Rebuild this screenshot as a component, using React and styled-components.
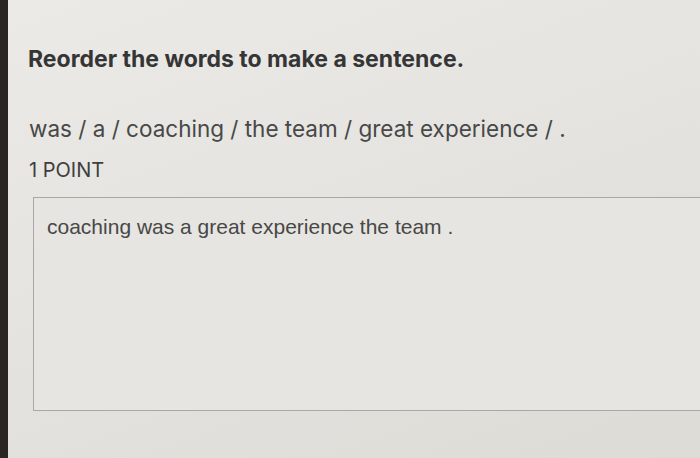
import React from "react";
import styled, { createGlobalStyle } from "styled-components";

const Global = createGlobalStyle`
  html, body { margin: 0; padding: 0; background: #e4e3df; }
  body { width: 700px; height: 458px; overflow: hidden; }
`;

const Screen = styled.div`
  display: flex;
  width: 700px;
  height: 458px;
  background: linear-gradient(160deg, #ebeae6 0%, #e4e3df 50%, #dcdbd6 100%);
  overflow: hidden;
`;

const Bezel = styled.div`
  flex: 0 0 8px;
  background: #2a2522;
`;

const Content = styled.main`
  flex: 1;
  display: flex;
  flex-direction: column;
  padding: 45px 0 0 19px;
  font-family: Inter, "Liberation Sans", sans-serif;
`;

const Heading = styled.h1`
  margin: 0 0 0 1px;
  font-size: 23px;
  line-height: 28px;
  font-weight: 700;
  color: #353535;
`;

const Prompt = styled.p`
  margin: 42px 0 0 2px;
  font-size: 22.5px;
  line-height: 28px;
  font-weight: 400;
  color: #484848;
`;

const Points = styled.div`
  margin: 15px 0 0 2px;
  font-size: 20px;
  line-height: 24px;
  color: #3e3e3e;
`;

const AnswerBox = styled.div`
  margin: 15px 0 0 6px;
  height: 214px;
  width: 700px;
  border: 1px solid #a9a8a4;
  background: #e6e5e1;
  padding: 17px 13px;
  box-sizing: border-box;
  font-family: "Liberation Sans", Arial, sans-serif;
  font-size: 21px;
  line-height: 24px;
  color: #484848;
`;

export default function App() {
  return (
    <>
      <Global />
      <Screen>
        <Bezel />
        <Content>
          <Heading>Reorder the words to make a sentence.</Heading>
          <Prompt>was / a / coaching / the team / great experience / .</Prompt>
          <Points>1 POINT</Points>
          <AnswerBox>coaching was a great experience the team .</AnswerBox>
        </Content>
      </Screen>
    </>
  );
}
